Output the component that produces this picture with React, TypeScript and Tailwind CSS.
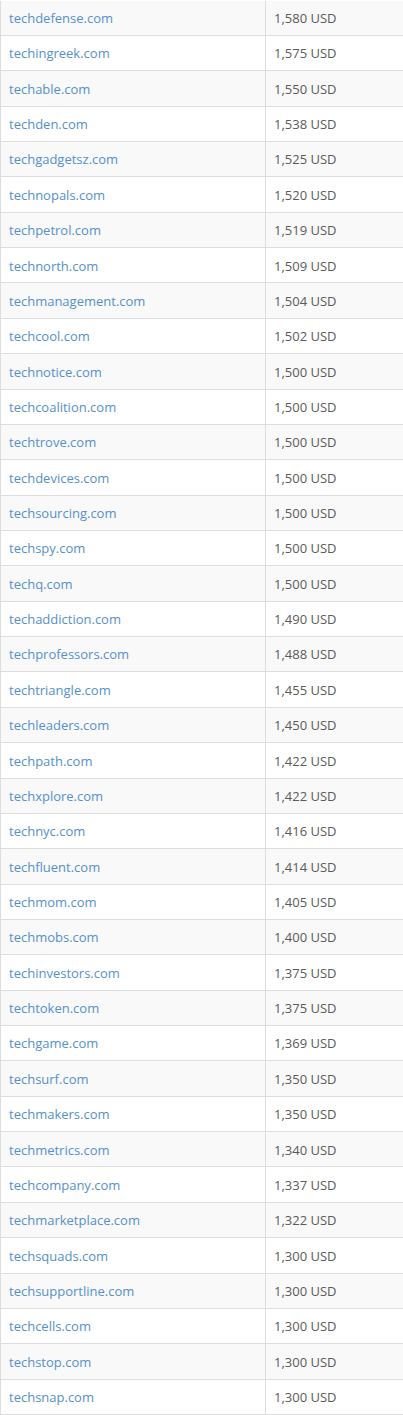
const ROWS: [string, string][] = [
  ['techdefense.com', '1,580'],
  ['techingreek.com', '1,575'],
  ['techable.com', '1,550'],
  ['techden.com', '1,538'],
  ['techgadgetsz.com', '1,525'],
  ['technopals.com', '1,520'],
  ['techpetrol.com', '1,519'],
  ['technorth.com', '1,509'],
  ['techmanagement.com', '1,504'],
  ['techcool.com', '1,502'],
  ['technotice.com', '1,500'],
  ['techcoalition.com', '1,500'],
  ['techtrove.com', '1,500'],
  ['techdevices.com', '1,500'],
  ['techsourcing.com', '1,500'],
  ['techspy.com', '1,500'],
  ['techq.com', '1,500'],
  ['techaddiction.com', '1,490'],
  ['techprofessors.com', '1,488'],
  ['techtriangle.com', '1,455'],
  ['techleaders.com', '1,450'],
  ['techpath.com', '1,422'],
  ['techxplore.com', '1,422'],
  ['technyc.com', '1,416'],
  ['techfluent.com', '1,414'],
  ['techmom.com', '1,405'],
  ['techmobs.com', '1,400'],
  ['techinvestors.com', '1,375'],
  ['techtoken.com', '1,375'],
  ['techgame.com', '1,369'],
  ['techsurf.com', '1,350'],
  ['techmakers.com', '1,350'],
  ['techmetrics.com', '1,340'],
  ['techcompany.com', '1,337'],
  ['techmarketplace.com', '1,322'],
  ['techsquads.com', '1,300'],
  ['techsupportline.com', '1,300'],
  ['techcells.com', '1,300'],
  ['techstop.com', '1,300'],
  ['techsnap.com', '1,300'],
];

export default function App() {
  return (
    <div className="w-[403px] h-[1415px] overflow-hidden bg-white pt-[0.6px] font-['Open_Sans',sans-serif] text-[13px]">
      <div className="w-[420px] border-l border-[#ddd]">
        {ROWS.map(([domain, price], i) => (
          <div
            key={domain}
            className={`flex h-[35.37px] border-b border-[#ddd] ${i % 2 === 0 ? 'bg-[#f9f9f9]' : 'bg-white'}`}
          >
            {/* Domain */}
            <div className="w-[265px] flex items-center pl-[8px] pt-[2px] border-r border-[#ddd]">
              <a href="#" className="text-[#5590cb]">{domain}</a>
            </div>
            {/* Price */}
            <div className="flex-1 flex items-center pl-[8px] pt-[2px] text-[#5a5a5a]">
              {price} USD
            </div>
          </div>
        ))}
      </div>
    </div>
  );
}
